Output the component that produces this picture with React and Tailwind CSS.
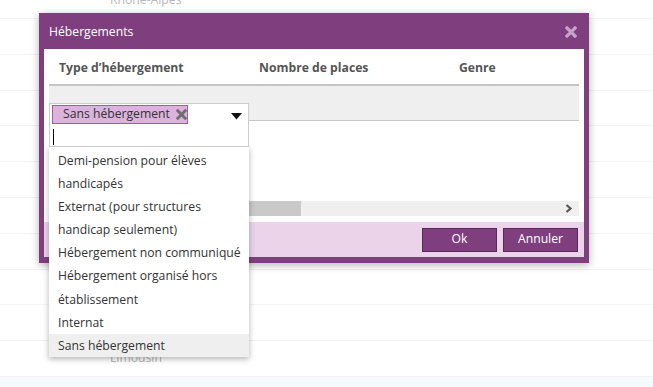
import React from 'react';

const regions = [
  'Rhône-Alpes',
  'Aquitaine',
  'Auvergne',
  'Bourgogne',
  'Bretagne',
  'Centre',
  'Corse',
  'Franche-Comté',
  'Île-de-France',
  'Languedoc-Roussillon',
  'Limousin'
];

const options = [
  'Demi-pension pour élèves handicapés',
  'Externat (pour structures handicap seulement)',
  'Hébergement non communiqué',
  'Hébergement organisé hors établissement',
  'Internat',
  'Sans hébergement'
];

// thick "x" like the font-awesome one
const Cross = ({ className, size = 11 }) => (
  <svg width={size} height={size} viewBox="0 0 12 12" className={className}>
    <path d="M2 2 L10 10 M10 2 L2 10" stroke="currentColor" strokeWidth="3.2" strokeLinecap="square" fill="none" />
  </svg>
);

const App = () => {
  const selected = 'Sans hébergement';

  return (
    <div className="relative w-[653px] h-[387px] overflow-hidden bg-white font-['Open_Sans',sans-serif] text-[12.2px]">
      {/* background list */}
      <div className="-mt-[16.8px]">
        {regions.map(name => (
          <div key={name} className="h-[35.8px] flex items-center pl-[110px] border-b border-[#f3f3f3] text-[#b8b8b8]">
            {name}
          </div>
        ))}
        <div className="h-[20px] bg-[#f5fafd]" />
      </div>

      {/* modal */}
      <div className="absolute left-[39px] top-[13px] w-[550px] bg-[#7f3f7e] px-[5px] pb-[6px] shadow-[0_2px_8px_rgba(0,0,0,0.3)]">
        <div className="h-[36px] pt-[2px] flex items-center justify-between pl-[5px] pr-[7px] text-white">
          <span>Hébergements</span>
          <Cross className="text-[#c6a3cc]" size={12} />
        </div>

        <div className="bg-white px-[5px] pb-[6px]">
          <div className="flex h-[37px] pt-[3px] items-center border-b-2 border-[#c4c4c4] overflow-hidden font-bold text-[#555]">
            <div className="w-[200px] shrink-0 pl-[10px]">Type d’hébergement</div>
            <div className="w-[200px] shrink-0 pl-[10px]">Nombre de places</div>
            <div className="w-[200px] shrink-0 pl-[10px]">Genre</div>
          </div>

          <div className="relative h-[35px] bg-[#efefef] border-b border-[#c8c8c8]">
            {/* select2 like widget */}
            <div className="absolute left-0 top-[17px] w-[200px] z-10">
              <div className="h-[44px] bg-white border border-[#cccccc] relative">
                <div className="absolute left-[2px] top-[1px] h-[19px] w-[136px] flex items-center gap-[6px] pl-[10px] bg-[#dbb4db] border border-[#a65aa6] text-[#333] whitespace-nowrap">
                  <span className="leading-none">{selected}</span>
                  <Cross className="text-[#6e6e6e]" size={11} />
                </div>
                <svg width="11" height="7" viewBox="0 0 11 7" className="absolute right-[6px] top-[9px]">
                  <path d="M0 0 H11 L5.5 6.5 Z" fill="#111" />
                </svg>
                <div className="absolute left-[3px] top-[25px] w-px h-[16px] bg-black" />
              </div>

              {/* dropdown */}
              <div className="bg-white pt-[2px] shadow-[0_2px_6px_rgba(0,0,0,0.3)] text-[#333]">
                {options.map(opt => (
                  <div
                    key={opt}
                    className={`pl-[9px] pr-[6px] leading-[23.1px] ${opt === selected ? 'bg-[#efefef]' : ''}`}
                  >
                    {opt}
                  </div>
                ))}
              </div>
            </div>
          </div>

          <div className="mt-[80px] h-[15px] bg-[#efefef] flex items-center justify-between">
            <div className="h-full w-[252px] bg-[#c9c9c9]" />
            <svg width="8" height="9" viewBox="0 0 8 9" className="mr-[6px]">
              <path d="M1.5 1 L5.5 4.5 L1.5 8" stroke="#555" strokeWidth="2.2" fill="none" />
            </svg>
          </div>
        </div>

        <div className="h-[35px] bg-[#ebd4ea] flex items-center justify-end gap-[6px] pr-[6px]">
          <button className="w-[75px] h-[24px] bg-[#7f3f7e] border border-[#5a2659] text-white">Ok</button>
          <button className="w-[75px] h-[24px] bg-[#7f3f7e] border border-[#5a2659] text-white">Annuler</button>
        </div>
      </div>
    </div>
  );
};

export default App;
